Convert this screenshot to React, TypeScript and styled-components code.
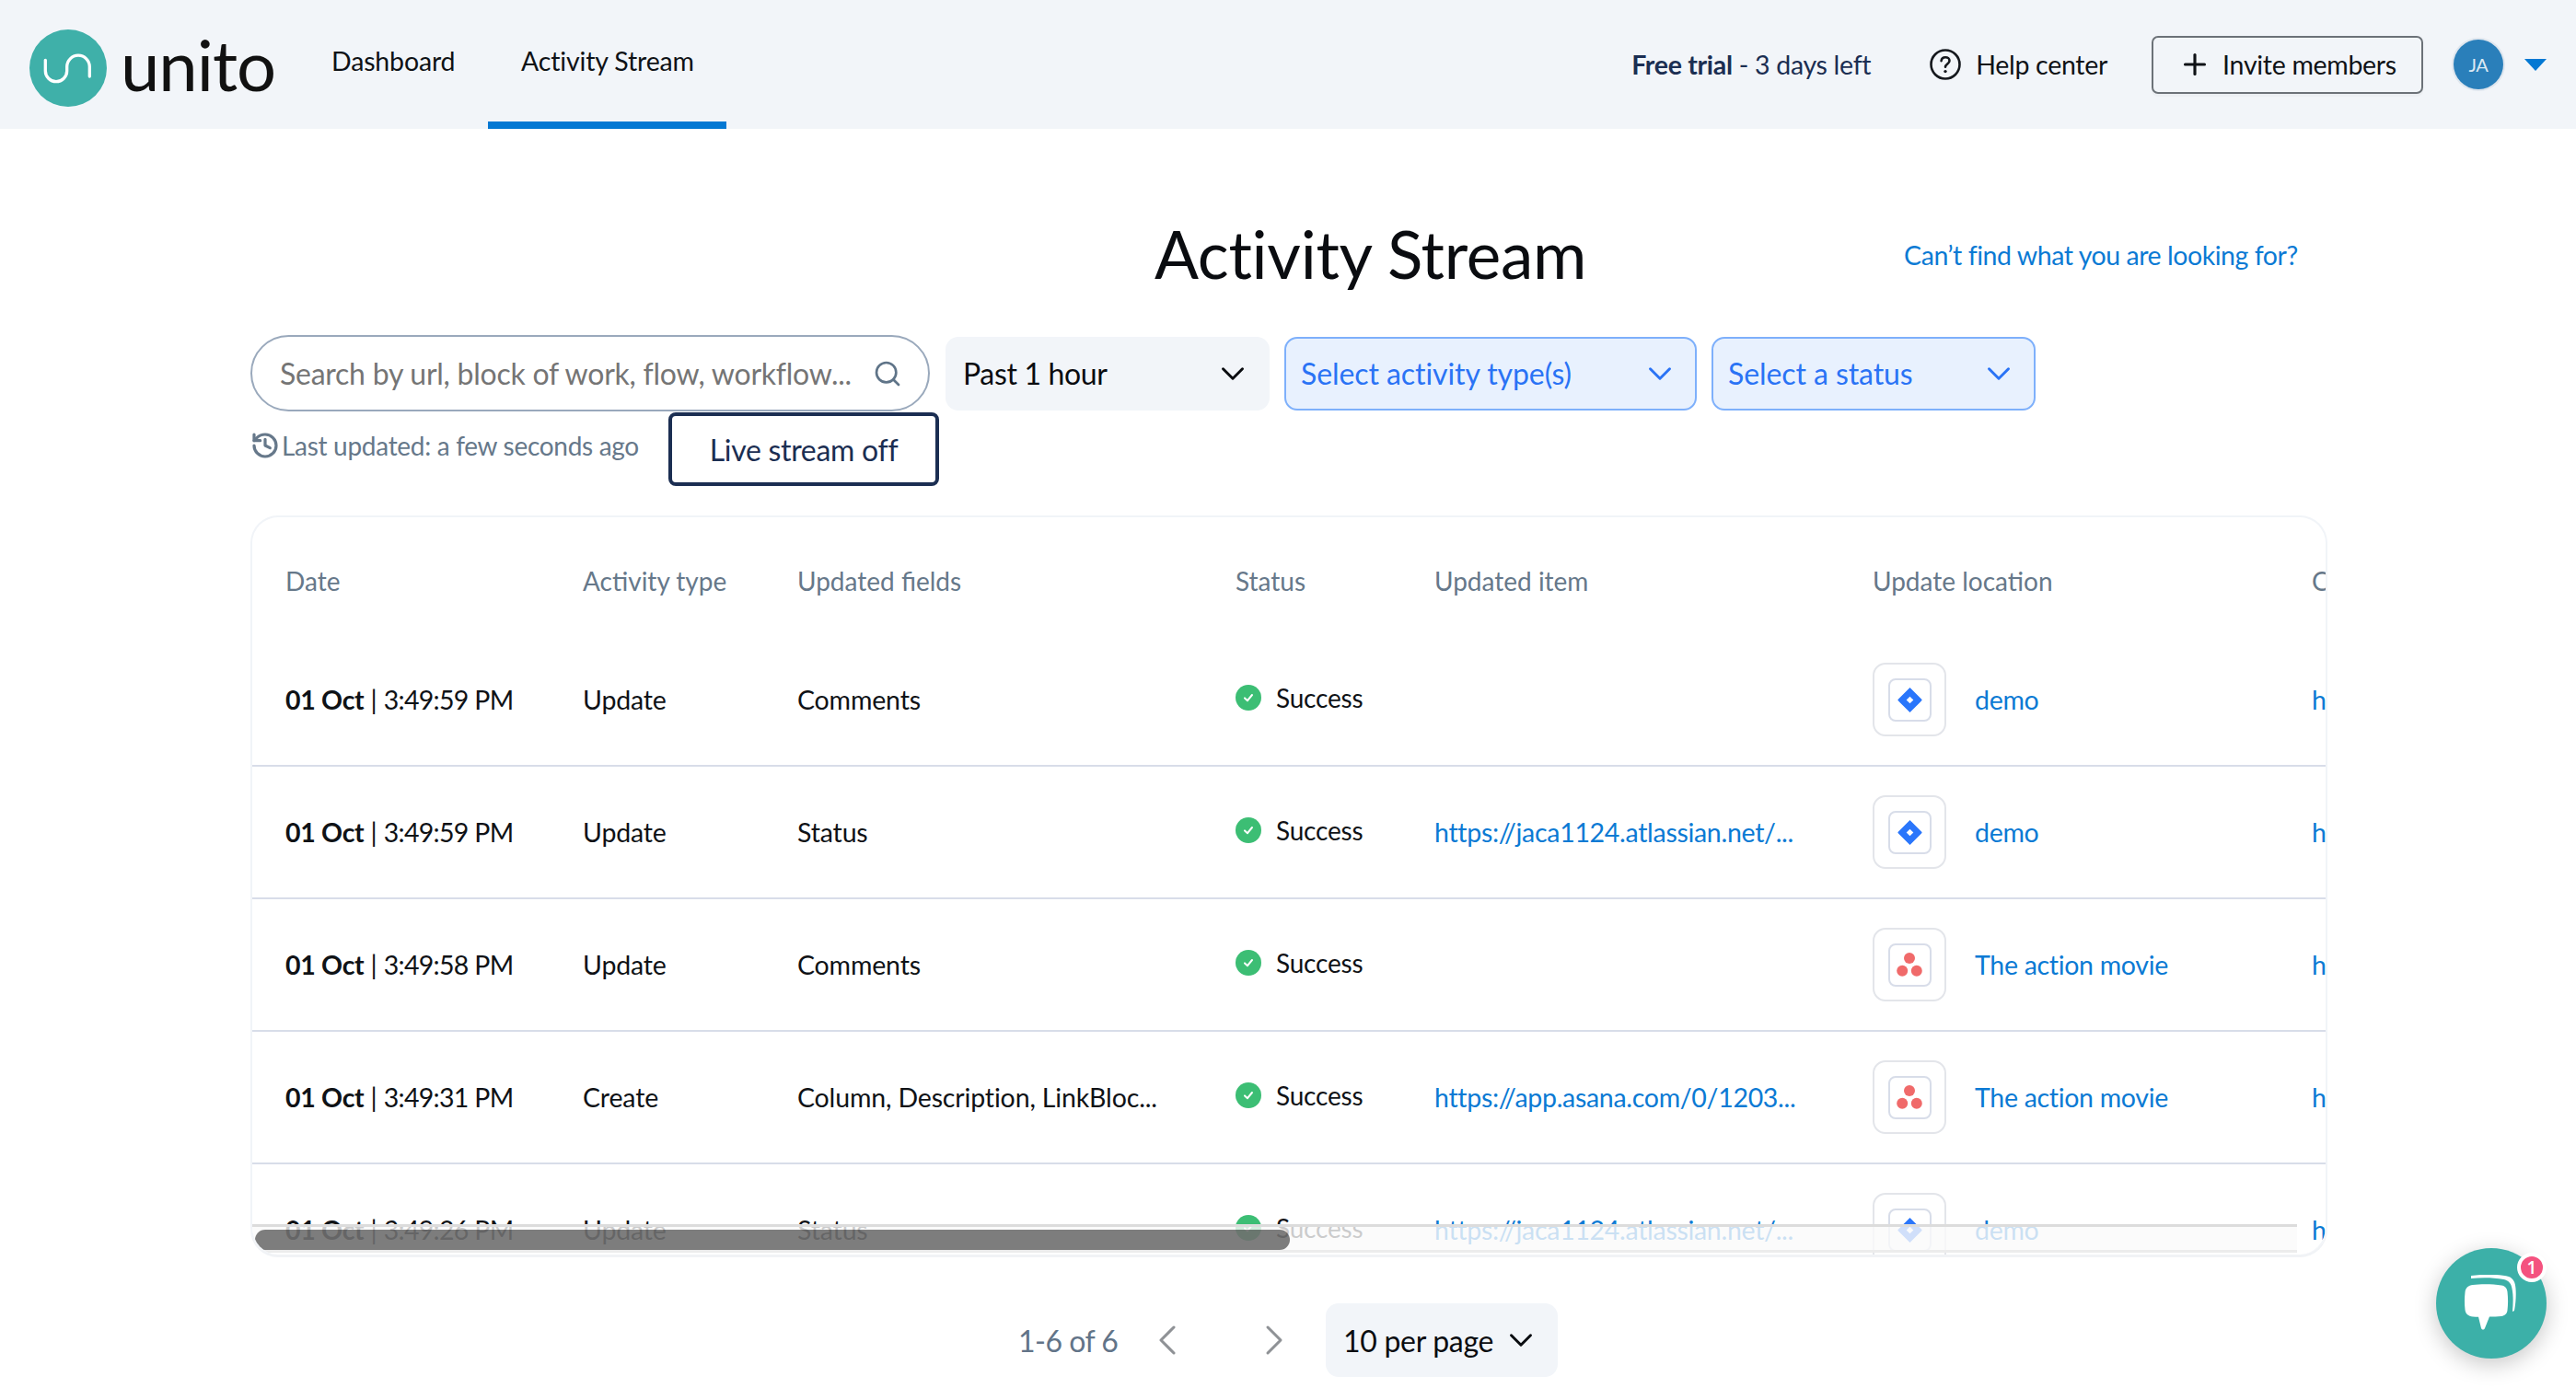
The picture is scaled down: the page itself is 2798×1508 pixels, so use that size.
import React from 'react';
import styled, { createGlobalStyle } from 'styled-components';
import { ChevronDown, ChevronLeft, ChevronRight, History, Plus, Search } from 'lucide-react';

const GlobalStyle = createGlobalStyle`
  html, body {
    margin: 0;
    padding: 0;
    background: #fff;
    font-family: Lato, "Liberation Sans", sans-serif;
    color: #0f1216;
    overflow: hidden;
  }
  * { box-sizing: border-box; }
`;

const Page = styled.div`
  position: relative;
  width: 2798px;
  height: 1508px;
  overflow: hidden;
`;

const Header = styled.header`
  height: 140px;
  background: #f2f5f9;
  display: flex;
  align-items: stretch;
  padding: 0 32px;
`;

const LogoWrap = styled.div`
  display: flex;
  align-items: center;
  gap: 15px;
  width: 328px;
  height: 148px;
`;

const Wordmark = styled.span`
  font-size: 76px;
  line-height: 1;
  letter-spacing: -1px;
  color: #111;
  margin-top: -8px;
`;

const NavLink = styled.a<{ $active?: boolean }>`
  display: flex;
  align-items: center;
  justify-content: center;
  width: ${(p) => (p.$active ? '259px' : 'auto')};
  margin-left: ${(p) => (p.$active ? '36px' : '0')};
  height: 140px;
  font-size: 28.5px;
  letter-spacing: -0.15px;
  border-bottom: 8px solid ${(p) => (p.$active ? '#0378d3' : 'transparent')};
`;

const HeaderRight = styled.div`
  margin-left: auto;
  display: flex;
  align-items: center;
  font-size: 28.5px;
  letter-spacing: -0.3px;
`;

const Trial = styled.span`
  color: #1b2e52;
  margin-right: 64px;
  b { font-weight: 700; }
`;

const HelpLink = styled.span`
  display: flex;
  align-items: center;
  gap: 16px;
  margin-right: 48px;
`;

const InviteButton = styled.button`
  display: flex;
  align-items: center;
  justify-content: center;
  gap: 12px;
  width: 295px;
  height: 63px;
  border: 2px solid #6c7278;
  border-radius: 7px;
  background: transparent;
  box-shadow: 0 3px 0 #eceff3;
  font: inherit;
  letter-spacing: inherit;
  color: #0f1216;
  margin-right: 33px;
`;

const Avatar = styled.div`
  width: 54px;
  height: 54px;
  border-radius: 50%;
  background: #2a7fba;
  box-shadow: 0 0 0 2px #dfe6ee;
  color: #dce9f3;
  font-size: 20px;
  display: flex;
  align-items: center;
  justify-content: center;
  margin-right: 23px;
`;

const Caret = styled.span`
  width: 0;
  height: 0;
  border-left: 12px solid transparent;
  border-right: 12px solid transparent;
  border-top: 13px solid #0378d3;
`;

const Main = styled.main`
  padding: 0 0 0 272px;
`;

const TitleRow = styled.div`
  height: 224px;
  display: flex;
  align-items: center;
  padding-top: 46px;
`;

const Title = styled.h1`
  margin: 0 0 0 982px;
  font-size: 71px;
  font-weight: 400;
  letter-spacing: -0.3px;
  color: #0a0c10;
`;

const HelpText = styled.a`
  margin-left: 345px;
  margin-top: 3px;
  font-size: 28.5px;
  letter-spacing: -0.45px;
  color: #0b7ad4;
`;

const Filters = styled.div`
  display: flex;
  align-items: center;
  height: 83px;
`;

const SearchBox = styled.div`
  width: 738px;
  height: 83px;
  border: 2px solid #9aa9bc;
  border-radius: 42px;
  display: flex;
  align-items: center;
  justify-content: space-between;
  padding: 0 28px 0 30px;
  margin-right: 17px;
  font-size: 32px;
  letter-spacing: -0.25px;
  color: #757575;
`;

const Select = styled.div<{ $width: number; $filled?: boolean }>`
  width: ${(p) => p.$width}px;
  height: 80px;
  border-radius: 14px;
  display: flex;
  align-items: center;
  justify-content: space-between;
  padding: 0 ${(p) => (p.$filled ? '17px' : '19px')} 0 ${(p) => (p.$filled ? '16px' : '19px')};
  margin-right: 16px;
  font-size: 32px;
  letter-spacing: ${(p) => (p.$filled ? '-0.08px' : '-0.35px')};
  color: ${(p) => (p.$filled ? '#2a73f5' : '#0a0c10')};
  background: ${(p) => (p.$filled ? '#e8f1fe' : '#f2f5f9')};
  border: ${(p) => (p.$filled ? '2px solid #7eb0fb' : 'none')};
`;

const LiveRow = styled.div`
  display: flex;
  align-items: flex-start;
  height: 81px;
  margin-top: 1px;
  margin-bottom: 31px;
`;

const Updated = styled.div`
  width: 454px;
  height: 72px;
  display: flex;
  align-items: center;
  gap: 2px;
  font-size: 28px;
  letter-spacing: -0.3px;
  color: #66788a;
`;

const LiveButton = styled.button`
  width: 294px;
  height: 80px;
  border: 4px solid #1b2e52;
  border-radius: 8px;
  background: #fff;
  font: inherit;
  font-size: 32px;
  letter-spacing: -0.3px;
  color: #1b2e52;
`;

const Card = styled.section`
  position: relative;
  width: 2256px;
  height: 803px;
  border: 2px solid #f1f4f8;
  border-bottom: none;
  border-radius: 30px;
  overflow: hidden;
  box-shadow: 0 3px 0 #f1f3f6;
`;

const columns = '323px 233px 476px 216px 476px 477px 300px';

const HeadRow = styled.div`
  display: grid;
  grid-template-columns: ${columns};
  padding-left: 36px;
  height: 127px;
  padding-top: 52px;
  font-size: 28px;
  letter-spacing: 0;
  color: #66788a;
`;

const Row = styled.div`
  display: grid;
  grid-template-columns: ${columns};
  align-items: center;
  padding-left: 36px;
  height: 144px;
  border-bottom: 2px solid #d8dde9;
  font-size: 28.5px;
  letter-spacing: -0.15px;
`;

const Cell = styled.div`
  white-space: nowrap;
  overflow: hidden;
  text-overflow: ellipsis;
  padding-right: 20px;
  b { font-weight: 700; letter-spacing: -0.3px; }
`;

const Time = styled.span`
  letter-spacing: -0.7px;
`;

const StatusCell = styled.div`
  display: flex;
  align-items: center;
  gap: 16px;
  font-size: 28px;
  letter-spacing: -0.2px;
  margin-top: -5px;
`;

const CheckBadge = styled.span`
  width: 28px;
  height: 28px;
  border-radius: 50%;
  background: #3cbe74;
  display: flex;
  align-items: center;
  justify-content: center;
`;

const Link = styled.a`
  color: #0b7ad4;
  letter-spacing: -0.3px;
`;

const Location = styled.div`
  display: flex;
  align-items: center;
  gap: 31px;
`;

const ToolBadge = styled.div`
  width: 80px;
  height: 80px;
  border: 2px solid #e3e5ea;
  border-radius: 14px;
  display: flex;
  align-items: center;
  justify-content: center;
`;

const ToolInner = styled.div`
  width: 47px;
  height: 47px;
  border: 2px solid #d8dde9;
  border-radius: 8px;
  display: flex;
  align-items: center;
  justify-content: center;
`;

const ScrollTrack = styled.div`
  position: absolute;
  left: 0;
  right: 31px;
  bottom: 2px;
  height: 31px;
  background: rgba(250, 250, 250, 0.8);
  border-top: 3px solid #dcdcdc;
  border-bottom: 3px solid #ececec;
`;

const ScrollThumb = styled.div`
  position: absolute;
  left: 3px;
  top: 3px;
  width: 1124px;
  height: 22px;
  border-radius: 11px;
  background: rgba(0, 0, 0, 0.5);
`;

const Pagination = styled.div`
  display: flex;
  align-items: center;
  height: 80px;
  margin-top: 53px;
  padding-left: 834px;
  font-size: 32px;
  letter-spacing: -0.5px;
  color: #627488;
`;

const PageCount = styled.span`
  width: 107px;
  margin-right: 27px;
  white-space: nowrap;
`;

const PageArrow = styled.span`
  width: 56px;
  display: flex;
  justify-content: center;
  margin-right: 60px;
  color: #8f9296;
  &:last-of-type { margin-right: 28px; }
`;

const PerPage = styled.div`
  width: 252px;
  height: 80px;
  border-radius: 14px;
  background: #f2f5f9;
  display: flex;
  align-items: center;
  justify-content: space-between;
  padding: 0 19px;
  letter-spacing: -0.3px;
  color: #0a0c10;
`;

const ChatBubble = styled.div`
  position: absolute;
  left: 2646px;
  top: 1356px;
  width: 120px;
  height: 120px;
  border-radius: 50%;
  background: #3cb0a8;
  box-shadow: 0 6px 24px rgba(0, 0, 0, 0.22);
  display: flex;
  align-items: center;
  justify-content: center;
`;

const ChatBadge = styled.span`
  position: absolute;
  left: 88px;
  top: 5px;
  width: 32px;
  height: 32px;
  border-radius: 50%;
  background: #f4527f;
  border: 4px solid #fff;
  color: #fff;
  font-size: 19px;
  font-family: "Open Sans", sans-serif;
  font-weight: 600;
  display: flex;
  align-items: center;
  justify-content: center;
`;

const JiraIcon = () => (
  <svg width="27" height="27" viewBox="0 0 27 27">
    <path fill="#2a76fb" d="M13.5 0 26 12.4a1.5 1.5 0 0 1 0 2.2L13.5 27 1 14.6a1.5 1.5 0 0 1 0-2.2Z" />
    <path fill="#fff" d="M13.5 9.7 17.3 13.5 13.5 17.3 9.7 13.5Z" />
  </svg>
);

const AsanaIcon = () => (
  <svg width="28" height="26" viewBox="0 0 28 26">
    <circle cx="14" cy="6" r="6" fill="#f06a6a" />
    <circle cx="6.2" cy="19.7" r="6" fill="#f06a6a" />
    <circle cx="21.8" cy="19.7" r="6" fill="#f06a6a" />
  </svg>
);

const HelpIcon = () => (
  <svg width="34" height="34" viewBox="0 0 34 34" fill="none">
    <circle cx="17" cy="17" r="15.5" stroke="#15181d" strokeWidth="2.6" />
    <path d="M12.6 13.2c.3-2.5 2.2-3.9 4.5-3.9 2.5 0 4.4 1.5 4.4 3.7 0 3.4-4.5 3.5-4.5 6.8" stroke="#15181d" strokeWidth="2.6" strokeLinecap="round" />
    <circle cx="17" cy="24.6" r="1.7" fill="#15181d" />
  </svg>
);

const ChatIcon = () => (
  <svg width="64" height="62" viewBox="0 0 64 62">
    <path fill="#fff" d="M10 1c14-2 32-1.5 41 1 5 2 7 6 7.5 13 .5 7 .2 15-1.5 24l-2 1c.8-9 1-18-.5-25-1-6-4-9-9-10C34 3 22 3 10 4Z" />
    <path fill="#fff" d="M12 11c8-1 22-1 31 .5 4 .8 6 3 6.5 7 .8 7 .8 14 0 20-.5 4-3 6-6.5 6.5-4 .4-9 .6-13 .6L25 58c-1 2-3 2-4 0l-3-12.2c-2 0-4-.1-6-.3-5-.7-8-3-8.500-7.500-.7-6-.7-13 0-19 .5-5 3.500-7.500 8.500-8Z" />
  </svg>
);

const UnitoMark = () => (
  <svg width="84" height="84" viewBox="0 0 84 84" fill="none">
    <circle cx="42" cy="42" r="42" fill="#3fb0a9" />
    <path d="M17.3 33.3V45a11.7 11.7 0 0 0 23.4 0v-4.5a12.3 12.3 0 0 1 24.6 0V51" stroke="#fff" strokeWidth="3.3" strokeLinecap="round" />
  </svg>
);

const CheckIcon = () => (
  <svg width="16" height="16" viewBox="0 0 16 16" fill="none">
    <path d="M4 8.4 7 11.2 12 5" stroke="#fff" strokeWidth="2" strokeLinecap="round" strokeLinejoin="round" />
  </svg>
);

type Activity = {
  time: string;
  type: string;
  fields: string;
  item?: string;
  tool: 'jira' | 'asana';
  location: string;
};

const rows: Activity[] = [
  { time: '3:49:59 PM', type: 'Update', fields: 'Comments', tool: 'jira', location: 'demo' },
  { time: '3:49:59 PM', type: 'Update', fields: 'Status', item: 'https://jaca1124.atlassian.net/...', tool: 'jira', location: 'demo' },
  { time: '3:49:58 PM', type: 'Update', fields: 'Comments', tool: 'asana', location: 'The action movie' },
  { time: '3:49:31 PM', type: 'Create', fields: 'Column, Description, LinkBloc...', item: 'https://app.asana.com/0/1203...', tool: 'asana', location: 'The action movie' },
  { time: '3:49:26 PM', type: 'Update', fields: 'Status', item: 'https://jaca1124.atlassian.net/...', tool: 'jira', location: 'demo' },
];

export default function App() {
  return (
    <Page>
      <GlobalStyle />
      <Header>
        <LogoWrap>
          <UnitoMark />
          <Wordmark>unito</Wordmark>
        </LogoWrap>
        <NavLink>Dashboard</NavLink>
        <NavLink $active>Activity Stream</NavLink>
        <HeaderRight>
          <Trial><b>Free trial</b> - 3 days left</Trial>
          <HelpLink><HelpIcon />Help center</HelpLink>
          <InviteButton><Plus size={36} strokeWidth={2.1} />Invite members</InviteButton>
          <Avatar>JA</Avatar>
          <Caret />
        </HeaderRight>
      </Header>
      <Main>
        <TitleRow>
          <Title>Activity Stream</Title>
          <HelpText>Can’t find what you are looking for?</HelpText>
        </TitleRow>
        <Filters>
          <SearchBox>
            Search by url, block of work, flow, workflow...
            <Search size={32} color="#5f7488" strokeWidth={2} />
          </SearchBox>
          <Select $width={352}>Past 1 hour<ChevronDown size={42} strokeWidth={1.7} color="#0a0c10" /></Select>
          <Select $width={448} $filled>Select activity type(s)<ChevronDown size={42} strokeWidth={1.7} color="#2a73f5" /></Select>
          <Select $width={352} $filled>Select a status<ChevronDown size={42} strokeWidth={1.7} color="#2a73f5" /></Select>
        </Filters>
        <LiveRow>
          <Updated><History size={32} color="#66788a" strokeWidth={2.4} />Last updated: a few seconds ago</Updated>
          <LiveButton>Live stream off</LiveButton>
        </LiveRow>
        <Card>
          <HeadRow>
            <div>Date</div>
            <div>Activity type</div>
            <div>Updated fields</div>
            <div>Status</div>
            <div>Updated item</div>
            <div>Update location</div>
            <div>Created item</div>
          </HeadRow>
          {rows.map((r, i) => (
            <Row key={i}>
              <Cell><b>01 Oct</b> | <Time>{r.time}</Time></Cell>
              <Cell>{r.type}</Cell>
              <Cell>{r.fields}</Cell>
              <StatusCell><CheckBadge><CheckIcon /></CheckBadge>Success</StatusCell>
              <Cell>{r.item && <Link>{r.item}</Link>}</Cell>
              <Location>
                <ToolBadge><ToolInner>{r.tool === 'jira' ? <JiraIcon /> : <AsanaIcon />}</ToolInner></ToolBadge>
                <Link>{r.location}</Link>
              </Location>
              <Cell><Link>https://app.asana.com/0/1203</Link></Cell>
            </Row>
          ))}
          <ScrollTrack><ScrollThumb /></ScrollTrack>
        </Card>
        <Pagination>
          <PageCount>1-6 of 6</PageCount>
          <PageArrow><ChevronLeft size={56} strokeWidth={1.3} /></PageArrow>
          <PageArrow><ChevronRight size={56} strokeWidth={1.3} /></PageArrow>
          <PerPage>10 per page<ChevronDown size={42} strokeWidth={1.7} color="#0a0c10" /></PerPage>
        </Pagination>
      </Main>
      <ChatBubble>
        <ChatIcon />
        <ChatBadge>1</ChatBadge>
      </ChatBubble>
    </Page>
  );
}
